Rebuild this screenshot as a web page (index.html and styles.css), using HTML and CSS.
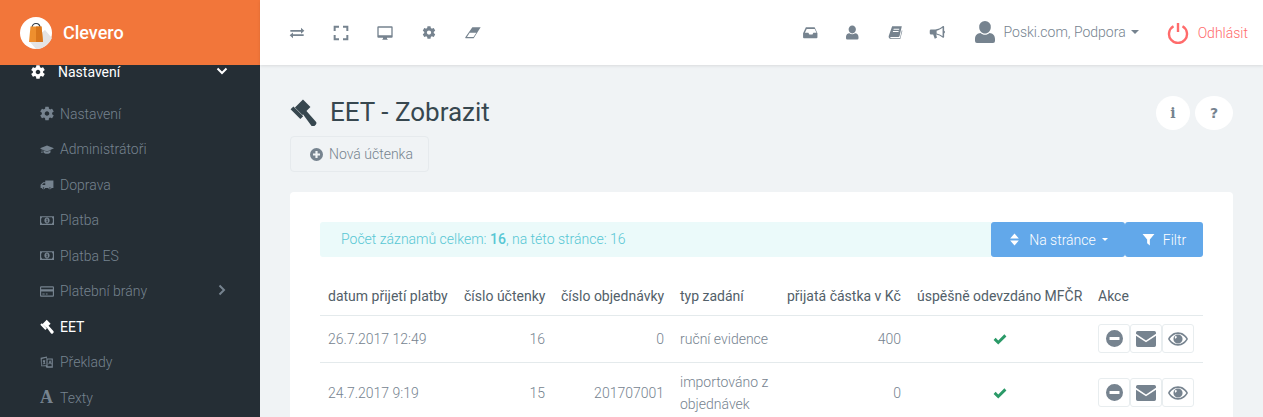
FILE: index.html
```html
<!DOCTYPE html>
<html lang="cs">
<head>
  <meta charset="UTF-8">
  <title>EET - Zobrazit</title>
  <link rel="stylesheet" href="styles.css">
</head>
<body>
  <svg class="sprite" xmlns="http://www.w3.org/2000/svg">
    <symbol id="i-cog" viewBox="2.200 2.200 19.600 19.600"><path fill-rule="evenodd" d="M19.140 12.940c.04-.3.06-.61.06-.94 0-.32-.02-.64-.07-.94l2.030-1.580a.49.49 0 0 0 .12-.61l-1.920-3.320a.488.488 0 0 0-.59-.22l-2.390.96c-.5-.38-1.030-.7-1.620-.94l-.36-2.540a.484.484 0 0 0-.48-.41h-3.840c-.24 0-.43.17-.47.41l-.36 2.540c-.59.24-1.130.57-1.620.94l-2.390-.96c-.22-.08-.47 0-.59.22L2.740 8.870c-.12.21-.08.47.12.61l2.030 1.580c-.05.3-.09.63-.09.94s.02.64.07.94l-2.030 1.580a.49.49 0 0 0-.12.61l1.920 3.320c.12.22.37.29.59.22l2.390-.96c.5.38 1.030.7 1.620.94l.36 2.540c.05.24.24.41.48.41h3.840c.24 0 .44-.17.47-.41l.36-2.540c.59-.24 1.130-.56 1.620-.94l2.390.96c.22.08.47 0 .59-.22l1.920-3.320c.12-.22.07-.47-.12-.61l-2.010-1.580zM12 15.200c-1.760 0-3.200-1.440-3.200-3.200s1.440-3.200 3.200-3.200 3.200 1.440 3.200 3.200-1.440 3.200-3.200 3.200z"/></symbol>
    <symbol id="i-cap" viewBox="0 0 24 24"><path d="M6 13.200v3.600c0 1.300 2.800 2.600 6 2.600s6-1.300 6-2.600v-3.600l-6 2.900zM12 5L0 10l3 1.400V15l-.8 3h2.200L4 15v-3l8 3.600L24 10z"/></symbol>
    <symbol id="i-truck" viewBox="0 0 24 24"><path fill-rule="evenodd" d="M23 5H9v3H5.500L1 12.500V18h2.100a3 3 0 0 0 5.800 0h5.200a3 3 0 0 0 5.800 0H23zM9 10v3H3.500l2.700-3zM6 16.500a1.300 1.300 0 1 1 0 2.600 1.300 1.300 0 0 1 0-2.600zm11 0a1.300 1.300 0 1 1 0 2.600 1.300 1.300 0 0 1 0-2.600z"/></symbol>
    <symbol id="i-money" viewBox="0 0 24 24"><path fill-rule="evenodd" d="M0 4.500h24v15H0zM3.500 6.500A3.500 3.500 0 0 1 2 9v6a3.500 3.500 0 0 1 1.500 2.500h17a3.500 3.500 0 0 1 1.500-2.500V9a3.500 3.500 0 0 1-1.500-2.500zM12 7c2.400 0 4.500 2.200 4.500 5s-2.100 5-4.500 5-4.500-2.200-4.500-5 2.100-5 4.500-5zM10.800 9.200v1.400h.7v3h-.8V15h3v-1.400h-.7V9.200z"/></symbol>
    <symbol id="i-card" viewBox="0 0 24 24"><path fill-rule="evenodd" d="M2 3h20a2 2 0 0 1 2 2v14a2 2 0 0 1-2 2H2a2 2 0 0 1-2-2V5a2 2 0 0 1 2-2zM2 5v3h20V5zM2 12v7h20v-7zM4 15.500h4V17H4zM10 15.500h3V17h-3z"/></symbol>
    <symbol id="i-gavel" viewBox="1 0 23.500 23.500"><path d="M8 7.500l2.500-2.500 12.900 14.500a2.200 2.200 0 0 1 0 2.900l-.9.900a2.200 2.200 0 0 1-2.900 0zM12.300 .5l6.500 6.500-7 7-6.500-6.500zM4 6.500l8.500 8.500-2.500 2.500L1.500 9z"/></symbol>
    <symbol id="i-language" viewBox="0 0 24 24"><path fill-rule="evenodd" d="M1 4l11-2.500V5h10v16H11l-1-2.500-8 0zM3 6v11l8-.5V4zM13 7v11.500h7V7zM5 8h4v1l-1 4 1.500 1-.7.8L7 14l-2 1.500-.6-.8L6.500 13l-1-2.500H5zM16.500 8.500H18l2 6.500h-1.500l-.4-1.500h-2l-.4 1.500h-1.500zM17.200 10.500l-.6 2h1.200z"/></symbol>
    <symbol id="i-exchange" viewBox="0 0 24 24"><path d="M2 7.500h16V4l5 4.700-5 4.300V10H2zM22 14v2.500H6V20l-5-4.500L6 11.200V14z"/></symbol>
    <symbol id="i-expand" viewBox="0 0 24 24"><path d="M1 1h8v3H4v5H1zM15 1h8v8h-3V4h-5zM1 15h3v5h5v3H1zM20 15h3v8h-8v-3h5z"/></symbol>
    <symbol id="i-desktop" viewBox="0 0 24 24"><path fill-rule="evenodd" d="M2 2h20a1.500 1.500 0 0 1 1.500 1.500v14A1.500 1.500 0 0 1 22 19h-7v1.500l1.500 1.500h-9L9 20.500V19H2a1.500 1.500 0 0 1-1.500-1.500v-14A1.500 1.500 0 0 1 2 2zM2.500 4v11.500h19V4z"/></symbol>
    <symbol id="i-eraser" viewBox="0 0 24 24"><path fill-rule="evenodd" d="M11 3.500h12.500L13 20H1.500a1 1 0 0 1-1-1.500zM7 11.500l-4 6.500h9.800l4.200-6.500z"/></symbol>
    <symbol id="i-inbox" viewBox="0 0 24 24"><path fill-rule="evenodd" d="M5 3.500h14l4.500 9.500v6.500a1.500 1.500 0 0 1-1.500 1.500H2a1.500 1.500 0 0 1-1.500-1.500V13zM6.300 6.500l-2.800 6h5.500l1.500 2.500h5l1.500-2.500h5l-2.800-6z"/></symbol>
    <symbol id="i-user" viewBox="0 0 24 24"><path d="M12 1a5.800 5.800 0 0 1 5.800 6.200c0 3.400-2.600 6.300-5.800 6.300S6.200 10.600 6.200 7.200A5.800 5.800 0 0 1 12 1zM7.500 13c1.200 1.100 2.800 1.800 4.500 1.800s3.300-.7 4.500-1.800c3.200.3 5.500 2.400 5.500 6v2a2 2 0 0 1-2 2H4a2 2 0 0 1-2-2v-2c0-3.600 2.300-5.700 5.500-6z"/></symbol>
    <symbol id="i-book" viewBox="0 0 24 24"><path fill-rule="evenodd" d="M7 2h15.500l-3.600 15.500c-.3 1-1 1.500-2 1.500H5c-1 0-1.200.4-.9 1 .2.5.7 1 1.900 1h13.500l3-12.500.9.500L20 22.500H5.500C2.800 22.500 1 20 1.500 17.500zM9.500 6l-.4 1.500h9l.4-1.500zM8.500 9.500L8.100 11h9l.4-1.500z"/></symbol>
    <symbol id="i-bullhorn" viewBox="0 0 24 24"><path fill-rule="evenodd" d="M22 1.500a1.500 1.500 0 0 1 1 1.500v6a2.500 2.500 0 0 1 0 4.500V19a1.500 1.500 0 0 1-2.500 1c-3-2.500-6.500-4.500-10-5h-.2l1.200 5.500-3.500 1.500-2.500-7H2a2 2 0 0 1-2-2V9a2 2 0 0 1 2-2h7c4 0 8.500-2.500 11.500-5a1.500 1.500 0 0 1 1.500-.5zM20.500 4.500c-3 2.300-6 3.800-9.500 4.500v4.500c3.500.7 6.500 2.200 9.500 4.500z"/></symbol>
    <symbol id="i-plus" viewBox="0 0 24 24"><path fill-rule="evenodd" d="M12 0a12 12 0 1 1 0 24 12 12 0 0 1 0-24zM10 5.500V10H5.500v4H10v4.500h4V14h4.500v-4H14V5.500z"/></symbol>
    <symbol id="i-sort" viewBox="0 0 24 24"><path d="M12 1l8 9H4zM12 23l-8-9h16z"/></symbol>
    <symbol id="i-filter" viewBox="0 0 24 24"><path d="M1 2h22l-8.500 10v11l-5-4v-7z"/></symbol>
    <symbol id="i-check" viewBox="0 0 24 24"><path d="M9 21.500L1 13.500l3.500-3.500L9 14.500 19.500 4 23 7.500z"/></symbol>
    <symbol id="i-minus" viewBox="0 0 24 24"><path fill-rule="evenodd" d="M12 0a12 12 0 1 1 0 24 12 12 0 0 1 0-24zM5 9.800v4.400h14V9.800z"/></symbol>
    <symbol id="i-mail" viewBox="0 0 24 24"><path d="M0 4.500a2 2 0 0 1 2-2h20a2 2 0 0 1 2 2v1.200l-12 8-12-8zM0 8l12 8 12-8v11.500a2 2 0 0 1-2 2H2a2 2 0 0 1-2-2z"/></symbol>
    <symbol id="i-eye" viewBox="0 0 24 24"><path fill-rule="evenodd" d="M12 4c5.500 0 9.800 3.500 12 8-2.200 4.500-6.500 8-12 8S2.200 16.500 0 12c2.200-4.500 6.500-8 12-8zM2 12c2.200 3.500 5.700 6 10 6s7.800-2.500 10-6c-2.200-3.500-5.700-6-10-6S4.200 8.500 2 12zM12 6.500a5.500 5.500 0 1 1 0 11 5.500 5.500 0 0 1 0-11zM8.500 8.500l2.500.8-1.800 2.400-1-1z"/></symbol>
  </svg>

  <div class="layout">
    <aside class="sidebar">
      <div class="brand">
        <svg class="brand-logo" viewBox="0 0 32 32">
          <circle cx="16" cy="16" r="16" fill="#fff"/>
          <path d="M10 25l6 7c8 0 13-5 16-11l-7-8z" fill="#e4e4e4"/>
          <path d="M12 11c0-6 8-6 8 0" fill="none" stroke="#2f3a44" stroke-width="1.200"/>
          <path d="M10.500 9.500h11L23 25H9z" fill="#ee8f2e"/>
          <path d="M16 9.500h5.500L23 25h-7z" fill="#d9761c"/>
        </svg>
        <span class="brand-name">Clevero</span>
      </div>
      <div class="menu-head">
        <svg class="ic head-ic"><use href="#i-cog"/></svg>
        <span class="menu-text">Nastavení</span>
        <svg class="chev" viewBox="0 0 12 8"><path d="M1.500 1.500L6 6l4.500-4.500" fill="none" stroke="currentColor" stroke-width="2"/></svg>
      </div>
      <ul class="menu">
        <li><svg class="ic"><use href="#i-cog"/></svg>Nastavení</li>
        <li><svg class="ic"><use href="#i-cap"/></svg>Administrátoři</li>
        <li><svg class="ic"><use href="#i-truck"/></svg>Doprava</li>
        <li><svg class="ic"><use href="#i-money"/></svg>Platba</li>
        <li><svg class="ic"><use href="#i-money"/></svg>Platba ES</li>
        <li><svg class="ic"><use href="#i-card"/></svg>Platební brány<svg class="chev chev-r" viewBox="0 0 8 12"><path d="M1.500 1.500L6 6l-4.500 4.500" fill="none" stroke="currentColor" stroke-width="2"/></svg></li>
        <li class="active"><svg class="ic"><use href="#i-gavel"/></svg>EET</li>
        <li><svg class="ic"><use href="#i-language"/></svg>Překlady</li>
        <li><span class="ic font-ic">A</span>Texty</li>
      </ul>
    </aside>

    <div class="content">
      <header class="topbar">
        <div class="tools">
          <svg class="ic tool"><use href="#i-exchange"/></svg>
          <svg class="ic tool"><use href="#i-expand"/></svg>
          <svg class="ic tool"><use href="#i-desktop"/></svg>
          <svg class="ic tool tool-small"><use href="#i-cog"/></svg>
          <svg class="ic tool"><use href="#i-eraser"/></svg>
        </div>
        <div class="tools tools-right">
          <svg class="ic tool"><use href="#i-inbox"/></svg>
          <svg class="ic tool"><use href="#i-user"/></svg>
          <svg class="ic tool"><use href="#i-book"/></svg>
          <svg class="ic tool"><use href="#i-bullhorn"/></svg>
        </div>
        <div class="account">
          <svg class="avatar"><use href="#i-user"/></svg>
          <span>Poski.com, Podpora</span>
          <span class="caret"></span>
        </div>
        <div class="logout">
          <svg class="power" viewBox="0 0 22 22"><path d="M6.500 4.200a9 9 0 1 0 9 0M11 1v9" fill="none" stroke="currentColor" stroke-width="2.400"/></svg>
          <span>Odhlásit</span>
        </div>
      </header>

      <main class="page">
        <div class="page-head">
          <div>
            <h1 class="title"><svg class="title-ic"><use href="#i-gavel"/></svg>EET - Zobrazit</h1>
            <button class="btn-new"><svg class="ic"><use href="#i-plus"/></svg>Nová účtenka</button>
          </div>
          <div class="round-btns">
            <span class="round">i</span>
            <span class="round round-q">?</span>
          </div>
        </div>

        <section class="panel">
          <div class="panel-top">
            <div class="alert">Počet záznamů celkem: <b>16</b>, na této stránce: 16</div>
            <button class="btn-blue"><svg class="ic"><use href="#i-sort"/></svg>Na stránce<span class="caret"></span></button>
            <button class="btn-blue btn-filter"><svg class="ic"><use href="#i-filter"/></svg>Filtr</button>
          </div>
          <table class="grid">
            <colgroup>
              <col class="c1"><col class="c2"><col class="c3"><col class="c4"><col class="c5"><col class="c6"><col class="c7">
            </colgroup>
            <thead>
              <tr>
                <th>datum přijetí platby</th>
                <th>číslo účtenky</th>
                <th>číslo objednávky</th>
                <th>typ zadání</th>
                <th>přijatá částka v Kč</th>
                <th>úspěšně odevzdáno MFČR</th>
                <th>Akce</th>
              </tr>
            </thead>
            <tbody>
              <tr>
                <td>26.7.2017 12:49</td>
                <td class="num">16</td>
                <td class="num">0</td>
                <td>ruční evidence</td>
                <td class="num">400</td>
                <td class="mid"><svg class="ok"><use href="#i-check"/></svg></td>
                <td class="actions">
                  <span class="act"><svg class="act-ic act-minus"><use href="#i-minus"/></svg></span><span class="act"><svg class="act-ic"><use href="#i-mail"/></svg></span><span class="act"><svg class="act-ic"><use href="#i-eye"/></svg></span>
                </td>
              </tr>
              <tr>
                <td>24.7.2017 9:19</td>
                <td class="num">15</td>
                <td class="num">201707001</td>
                <td>importováno z objednávek</td>
                <td class="num">0</td>
                <td class="mid"><svg class="ok"><use href="#i-check"/></svg></td>
                <td class="actions">
                  <span class="act"><svg class="act-ic act-minus"><use href="#i-minus"/></svg></span><span class="act"><svg class="act-ic"><use href="#i-mail"/></svg></span><span class="act"><svg class="act-ic"><use href="#i-eye"/></svg></span>
                </td>
              </tr>
            </tbody>
          </table>
        </section>
      </main>
    </div>
  </div>
</body>
</html>
```

FILE: styles.css
```css
* {
  box-sizing: border-box;
}
html, body {
  height: 100%;
}
body {
  margin: 0;
  overflow: hidden;
  font-family: Roboto, "Liberation Sans", sans-serif;
  font-size: 14px;
  font-weight: 300;
  line-height: 22px;
  color: #76838f;
  background-color: #f0f3f5;
}
.sprite {
  display: none;
}
.ic {
  width: 14px;
  height: 14px;
  fill: currentColor;
  flex: none;
}
.layout {
  display: flex;
  height: 100%;
}

/* sidebar */
.sidebar {
  width: 260px;
  flex: none;
  overflow: hidden;
  background-color: #252e35;
  color: #76838f;
}
.brand {
  height: 65px;
  display: flex;
  align-items: center;
  gap: 11px;
  padding-left: 20px;
  background-color: #f2763a;
}
.brand-logo {
  width: 32px;
  height: 32px;
}
.brand-name {
  color: #fff;
  font-size: 18px;
  font-weight: 500;
}
.menu-head {
  height: 14px;
  display: flex;
  align-items: center;
  padding-left: 31px;
  color: #fff;
  font-weight: 400;
}
.menu-text {
  margin-left: 13px;
}
.head-ic {
  margin-top: -1px;
}
.chev {
  width: 12px;
  height: 8px;
  margin-left: 96px;
  margin-top: -2px;
}
.menu {
  list-style: none;
  margin: 0;
  padding: 17px 0 0;
}
.menu li {
  height: 35.5px;
  display: flex;
  align-items: center;
  padding-left: 40px;
}
.menu li .ic {
  width: 14px;
  height: 15px;
  margin-right: 6px;
}
.menu .active {
  color: #fff;
  font-weight: 400;
}
.chev-r {
  width: 8px;
  height: 12px;
  margin-left: 71px;
  margin-top: -2px;
}
.menu .font-ic {
  font-family: "Liberation Serif", serif;
  font-weight: bold;
  font-size: 18px;
  line-height: 14px;
}

/* top bar */
.content {
  flex: 1;
  min-width: 0;
}
.topbar {
  height: 65px;
  display: flex;
  align-items: center;
  background-color: #fff;
  box-shadow: 0 1px 3px rgba(0, 0, 0, 0.1);
  padding-left: 15px;
}
.tools {
  display: flex;
  align-items: center;
}
.tool {
  width: 44px;
  height: 16px;
}
.tool-small {
  height: 13px;
}
.tools-right {
  margin-left: auto;
}
.tools-right .tool {
  width: 42.5px;
  height: 15px;
}
.account {
  display: flex;
  align-items: center;
  margin-left: 14px;
  margin-top: -2px;
}
.avatar {
  width: 24px;
  height: 24px;
  fill: currentColor;
  margin-right: 7px;
}
.caret {
  display: inline-block;
  margin-left: 5px;
  border-top: 4px solid currentColor;
  border-left: 4px solid transparent;
  border-right: 4px solid transparent;
}
.logout {
  display: flex;
  align-items: center;
  gap: 9px;
  margin-left: 28px;
  margin-right: 15px;
  color: #ff6b6b;
}
.power {
  width: 22px;
  height: 22px;
}

/* page */
.page {
  padding: 31px 30px 0;
}
.page-head {
  display: flex;
  justify-content: space-between;
}
.title {
  margin: 0 0 8px;
  height: 32px;
  display: flex;
  align-items: center;
  font-size: 26px;
  font-weight: 400;
  color: #37474f;
}
.title-ic {
  width: 27px;
  height: 27px;
  fill: currentColor;
  margin-right: 13px;
}
.btn-new {
  display: flex;
  align-items: center;
  gap: 6px;
  width: 139px;
  height: 36px;
  padding: 0 0 0 19px;
  font: inherit;
  color: #76838f;
  background-color: #f0f3f5;
  border: 1px solid #e6eaed;
  border-radius: 4px;
}
.btn-new .ic {
  width: 13px;
  height: 13px;
}
.round-btns {
  display: flex;
  gap: 5px;
}
.round {
  width: 34px;
  height: 34px;
  display: flex;
  align-items: center;
  justify-content: center;
  border-radius: 50%;
  background-color: #fff;
  font-family: "DejaVu Serif", serif;
  font-weight: bold;
  font-size: 14px;
}
.round-q {
  width: 38px;
  font-family: "DejaVu Sans", sans-serif;
}
.panel {
  margin-top: 20px;
  padding: 30px;
  background-color: #fff;
  border-radius: 4px;
}
.panel-top {
  display: flex;
  height: 35px;
}
.alert {
  flex: 1;
  padding-left: 21px;
  line-height: 35px;
  color: #57c7d4;
  background-color: #ebfafa;
  border-radius: 3px 0 0 3px;
}
.alert b {
  font-weight: 500;
}
.btn-blue {
  display: flex;
  align-items: center;
  justify-content: center;
  gap: 8px;
  width: 134px;
  padding: 0;
  border: 0;
  border-radius: 3px;
  font: inherit;
  color: #fff;
  background-color: #62a8ea;
}
.btn-blue .ic {
  width: 13px;
  height: 13px;
}
.btn-blue .caret {
  margin-left: -2px;
  border-width: 3.5px 3.5px 0;
}
.btn-filter {
  width: 78px;
}
.grid {
  width: 883px;
  margin-top: 20px;
  border-collapse: collapse;
  table-layout: fixed;
}
.c1 { width: 136px; }
.c2 { width: 97px; }
.c3 { width: 119px; }
.c4 { width: 107px; }
.c5 { width: 130px; }
.c6 { width: 181px; }
.c7 { width: 113px; }
.grid th {
  padding: 8px;
  font-weight: 400;
  text-align: left;
  white-space: nowrap;
  color: #526069;
  border-bottom: 1px solid #e4eaec;
}
.grid td {
  padding: 8px;
  vertical-align: middle;
  border-bottom: 1px solid #e4eaec;
}
.grid .num {
  text-align: right;
}
.grid .mid {
  text-align: center;
}
.ok {
  display: block;
  width: 14px;
  height: 14px;
  margin: 0 auto;
  fill: #2b9a68;
}
.grid .actions {
  padding-bottom: 9px;
  white-space: nowrap;
}
.act {
  display: inline-flex;
  align-items: center;
  justify-content: center;
  width: 32px;
  height: 29px;
  border: 1px solid #e8edef;
  border-radius: 3px;
  vertical-align: top;
}
.act-ic {
  width: 20px;
  height: 20px;
  fill: currentColor;
}
.act-minus {
  width: 17px;
  height: 17px;
}
```
